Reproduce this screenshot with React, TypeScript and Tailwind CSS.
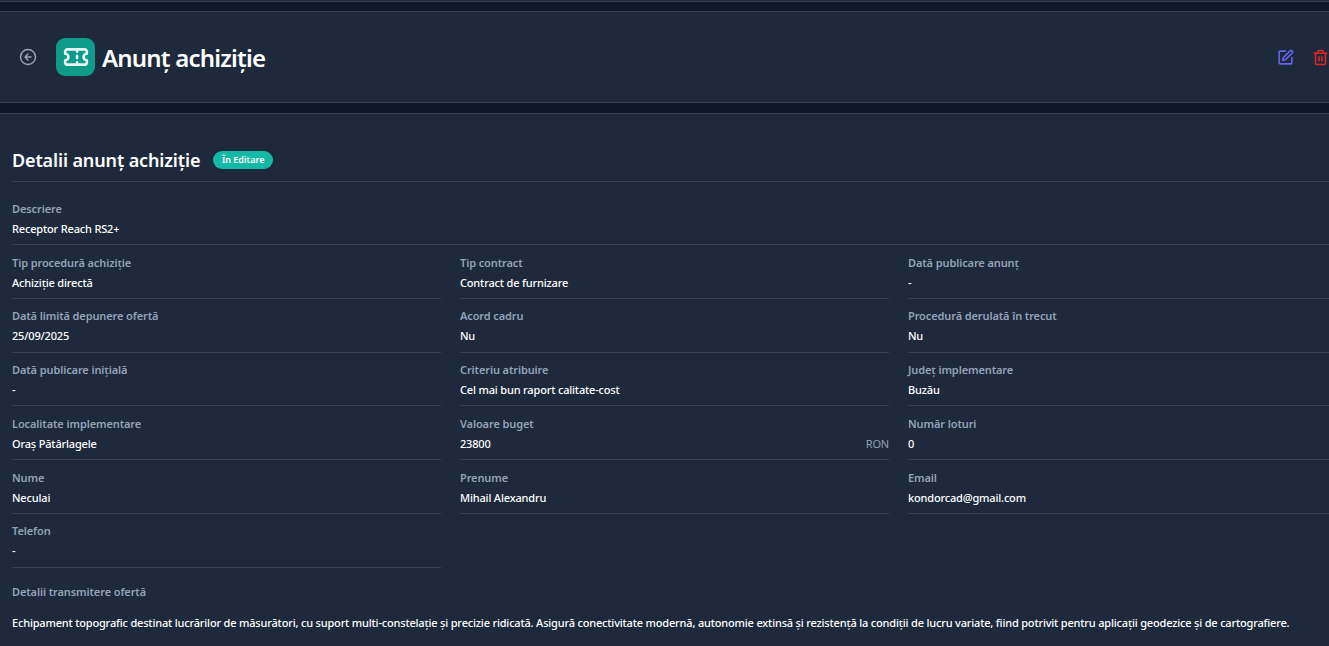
import { SquarePen, Trash2 } from "lucide-react";

const font = "[font-family:'Noto_Sans',sans-serif]";

function Field({ label, value, suffix }: { label: string; value: string; suffix?: string }) {
  return (
    <div className="h-[53.75px] border-b border-[#374151] pt-[7.6px]">
      <div className="h-[20px] text-[11px] leading-[20px] font-semibold tracking-[-0.11px] text-[#94a3b8]">{label}</div>
      <div className="flex h-[20px] justify-between text-[11px] leading-[20px] font-medium tracking-[-0.17px] text-white">
        <span>{value}</span>
        {suffix && <span className="font-normal text-[#94a3b8]">{suffix}</span>}
      </div>
    </div>
  );
}

const fields: { label: string; value: string; suffix?: string }[] = [
  { label: "Tip procedură achiziție", value: "Achiziție directă" },
  { label: "Tip contract", value: "Contract de furnizare" },
  { label: "Dată publicare anunț", value: "-" },
  { label: "Dată limită depunere ofertă", value: "25/09/2025" },
  { label: "Acord cadru", value: "Nu" },
  { label: "Procedură derulată în trecut", value: "Nu" },
  { label: "Dată publicare inițială", value: "-" },
  { label: "Criteriu atribuire", value: "Cel mai bun raport calitate-cost" },
  { label: "Județ implementare", value: "Buzău" },
  { label: "Localitate implementare", value: "Oraș Pătârlagele" },
  { label: "Valoare buget", value: "23800", suffix: "RON" },
  { label: "Număr loturi", value: "0" },
  { label: "Nume", value: "Neculai" },
  { label: "Prenume", value: "Mihail Alexandru" },
  { label: "Email", value: "kondorcad@gmail.com" },
  { label: "Telefon", value: "-" },
];

export default function App() {
  return (
    <div className={`h-[646px] w-[1329px] overflow-hidden bg-[#0f172a] ${font}`}>
      <div className="w-[1349px]">
        <div className="h-[2px] border-b border-[#374151] bg-[#1e293b]" />
        <div className="h-[9px]" />
        <header className="flex h-[92px] items-center justify-between border-y border-[#374151] bg-[#1e293b] pl-[19px] pr-[20px]">
          <div className="flex items-center">
            <svg viewBox="0 0 24 24" className="h-[18px] w-[18px] text-[#9ca3af]" fill="none" stroke="currentColor" strokeWidth="2" strokeLinecap="round" strokeLinejoin="round">
              <circle cx="12" cy="12" r="10" />
              <path d="M16 12H8M12 8l-4 4 4 4" />
            </svg>
            <div className="ml-[19px] flex h-[38px] w-[39px] items-center justify-center rounded-[9px] bg-[#0f9b8a]">
              <svg viewBox="0 0 24 24" className="h-[26px] w-[26px] text-[#e8f7f5]" fill="none" stroke="currentColor" strokeWidth="2.4" strokeLinecap="round" strokeLinejoin="round">
                <path d="M2 9a3 3 0 0 1 0 6v2a2 2 0 0 0 2 2h16a2 2 0 0 0 2-2v-2a3 3 0 0 1 0-6V7a2 2 0 0 0-2-2H4a2 2 0 0 0-2 2Z" />
                <path d="M13 5v2M13 11v2M13 17v2" />
              </svg>
            </div>
            <h1 className="ml-[7px] mt-[2px] text-[24px] leading-[38px] font-semibold tracking-[-0.8px] text-white">Anunț achiziție</h1>
          </div>
          <div className="flex items-center gap-[18px]">
            <SquarePen className="h-[17px] w-[17px] text-[#6366f1]" strokeWidth={2.2} />
            <Trash2 className="h-[17px] w-[17px] text-[#dc2626]" strokeWidth={2.2} />
          </div>
        </header>
        <div className="h-[10px]" />
        <main className="h-[540px] border-t border-[#374151] bg-[#1e293b] px-[12px] pt-[33px] text-white">
          <div className="flex h-[35px] items-center gap-[13px] border-b border-[#374151] pb-[8px]">
            <h2 className="text-[18px] leading-[28px] font-semibold tracking-[-0.13px] text-white">Detalii anunț achiziție</h2>
            <span className="rounded-full bg-[#14b8a6] px-[8.5px] text-[9px] leading-[18px] font-semibold text-white">În Editare</span>
          </div>
          <div className="mt-[17px] h-[46px] border-b border-[#374151]">
            <div className="h-[20px] text-[11px] leading-[20px] font-semibold tracking-[-0.11px] text-[#94a3b8]">Descriere</div>
            <div className="text-[11px] leading-[20px] font-medium tracking-[-0.17px] text-white">Receptor Reach RS2+</div>
          </div>
          <div className="grid grid-cols-3 gap-x-[19px]">
            {fields.map((f) => (
              <Field key={f.label} {...f} />
            ))}
          </div>
          <div className="mt-[14.5px] text-[11px] leading-[20px] font-semibold tracking-[-0.11px] text-[#94a3b8]">Detalii transmitere ofertă</div>
          <p className="mt-[11px] text-[11px] leading-[20px] font-medium tracking-[-0.18px] whitespace-nowrap text-white">
            Echipament topografic destinat lucrărilor de măsurători, cu suport multi-constelație și precizie ridicată. Asigură conectivitate modernă, autonomie extinsă și rezistență la condiții de lucru variate, fiind potrivit pentru aplicații geodezice și de cartografiere.
          </p>
        </main>
      </div>
    </div>
  );
}
